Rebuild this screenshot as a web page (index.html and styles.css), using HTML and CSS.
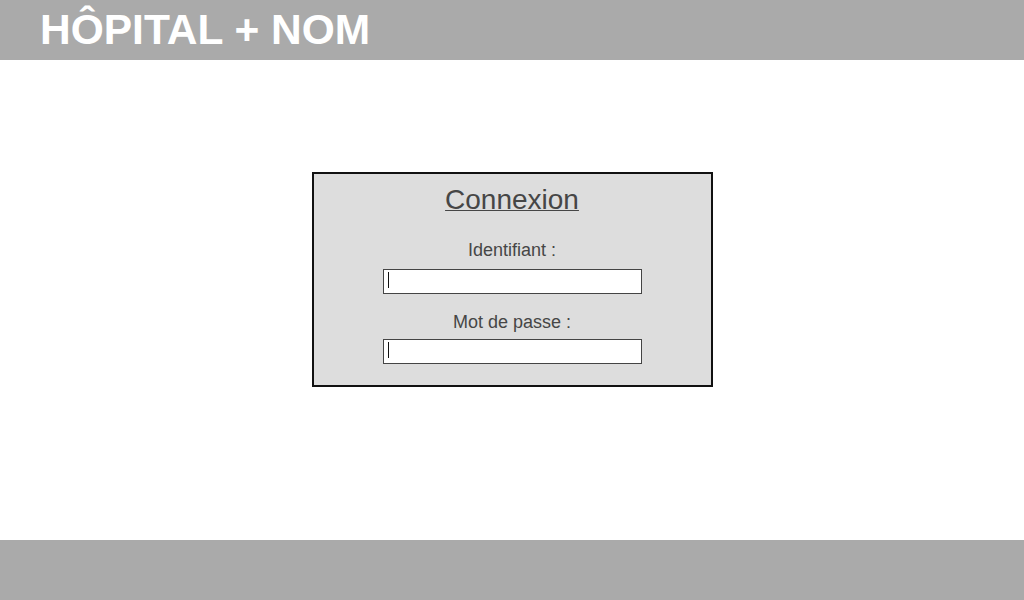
FILE: index.html
```html
<!DOCTYPE html>
<html lang="fr">
<head>
<meta charset="utf-8">
<title>Connexion</title>
<link rel="stylesheet" href="styles.css">
</head>
<body>
<div class="page">
  <header class="topbar">
    <h1 class="brand">HÔPITAL + NOM</h1>
  </header>
  <main class="content">
    <form class="login">
      <h2 class="login-title">Connexion</h2>
      <label class="field-label label-first">Identifiant :</label>
      <div class="field field-first"><span class="caret"></span></div>
      <label class="field-label label-second">Mot de passe :</label>
      <div class="field field-second"><span class="caret"></span></div>
    </form>
  </main>
  <footer class="bottombar"></footer>
</div>
</body>
</html>
```

FILE: styles.css
```css
html, body {
  margin: 0;
  padding: 0;
  background: #ffffff;
}
body {
  font-family: "Liberation Sans", Arial, sans-serif;
}
.page {
  width: 1024px;
  height: 600px;
  display: flex;
  flex-direction: column;
}
.topbar {
  height: 60px;
  background: #aaaaaa;
  padding-left: 40px;
  flex: none;
}
.brand {
  margin: 0;
  font-size: 42.5px;
  line-height: 60px;
  font-weight: bold;
  color: #ffffff;
}
.content {
  flex: 1;
  display: flex;
  flex-direction: column;
  align-items: center;
  padding-top: 112px;
}
.login {
  width: 397px;
  border: 2px solid #111111;
  background: #dddddd;
  display: flex;
  flex-direction: column;
  align-items: center;
  padding: 10px 0 21px;
  color: #464646;
}
.login-title {
  margin: 0;
  font-size: 28px;
  line-height: 32px;
  font-weight: normal;
  text-decoration: underline;
  text-decoration-thickness: 1px;
}
.field-label {
  font-size: 18px;
  line-height: 22px;
  display: block;
}
.label-first { margin-top: 23px; }
.label-second { margin-top: 17px; }
.field {
  height: 23px;
  border: 1px solid #444444;
  background: #ffffff;
  display: flex;
  align-items: center;
  padding-left: 4px;
  width: 253px;
}
.field-first { margin-top: 8px; }
.field-second { margin-top: 6px; }
.caret {
  width: 1px;
  height: 16px;
  margin-top: -3px;
  background: #111111;
}
.bottombar {
  height: 60px;
  background: #aaaaaa;
  flex: none;
}
```
